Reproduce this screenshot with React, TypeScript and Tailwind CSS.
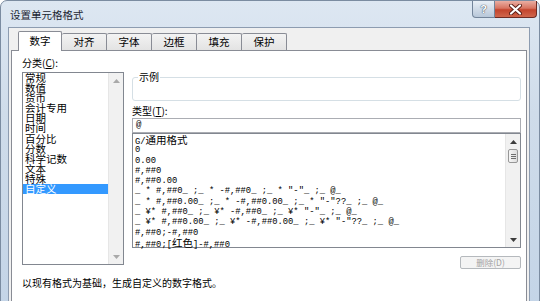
import React from 'react';

const categories = ['常规', '数值', '货币', '会计专用', '日期', '时间', '百分比', '分数', '科学记数', '文本', '特殊', '自定义'];

const formats = [
  'G/通用格式',
  '0',
  '0.00',
  '#,##0',
  '#,##0.00',
  '_ * #,##0_ ;_ * -#,##0_ ;_ * "-"_ ;_ @_',
  '_ * #,##0.00_ ;_ * -#,##0.00_ ;_ * "-"??_ ;_ @_',
  '_ ¥* #,##0_ ;_ ¥* -#,##0_ ;_ ¥* "-"_ ;_ @_',
  '_ ¥* #,##0.00_ ;_ ¥* -#,##0.00_ ;_ ¥* "-"??_ ;_ @_',
  '#,##0;-#,##0',
  '#,##0;[红色]-#,##0',
];

const tabs = ['数字', '对齐', '字体', '边框', '填充', '保护'];

const Arrow: React.FC<{ up?: boolean; dim?: boolean }> = ({ up, dim }) => (
  <svg width="7" height="4" viewBox="0 0 7 4">
    <path d={up ? 'M0 4L3.5 0L7 4Z' : 'M0 0L3.5 4L7 0Z'} fill={dim ? '#a9a9a9' : '#3c3c3c'} />
  </svg>
);

const FormatLine: React.FC<{ text: string }> = ({ text }) => {
  const parts = text.split(/([\u4e00-\u9fff]+)/);
  return (
    <div className="whitespace-pre h-[10.3px] leading-[10.3px]">
      {parts.map((p, i) =>
        /[\u4e00-\u9fff]/.test(p) ? (
          <span key={i} className="font-['Noto_Sans_CJK_SC',sans-serif] text-[10.5px]">
            {p}
          </span>
        ) : (
          <span key={i}>{p}</span>
        )
      )}
    </div>
  );
};

export default function App() {
  return (
    <div className="w-[547px] h-[301px] overflow-hidden bg-white font-['Noto_Sans_CJK_SC','Liberation_Sans',sans-serif] text-black">
      <div className="w-[540px] h-[320px] rounded-t-[7px] border border-[#7b8ca1] bg-[linear-gradient(180deg,#dde7f2_0%,#cfdcea_35%,#c3d4e7_100%)] flex flex-col">
        {/* title bar */}
        <div className="h-[26px] shrink-0 flex justify-between">
          <div className="pl-[9px] pt-[7px] text-[10.5px] leading-[14px] text-[#1d2633]">设置单元格格式</div>
          <div className="flex items-start mr-[2px]">
            <div className="w-[23px] h-[17px] rounded-bl-[4px] border border-t-0 border-[#73849a] bg-gradient-to-b from-[#e9eff6] to-[#b8c7d9] flex items-center justify-center">
              <span className="font-['Liberation_Sans',sans-serif] font-bold text-[11px] leading-none text-white [text-shadow:0_0_1px_#3a4656,0_0_1px_#3a4656]">?</span>
            </div>
            <div className="w-[42px] h-[17px] rounded-br-[4px] border border-t-0 border-l-0 border-[#6e2a22] bg-[linear-gradient(180deg,#eaaea3_0%,#d77461_45%,#c3442d_55%,#d0664c_100%)] flex items-center justify-center">
              <svg width="13" height="11" viewBox="0 0 13 11">
                <path d="M2 1.5L11 9.5M11 1.5L2 9.5" stroke="#5a1d16" strokeWidth="4" strokeLinecap="round" />
                <path d="M2 1.5L11 9.5M11 1.5L2 9.5" stroke="#ffffff" strokeWidth="2.2" strokeLinecap="round" />
              </svg>
            </div>
          </div>
        </div>

        {/* client area */}
        <div className="flex-1 ml-[7px] mr-[9px] bg-[#f0f0f0] border border-[#8d9cb0] flex flex-col">
          {/* tabs */}
          <div className="flex items-end pl-[9px] pt-[3px] relative z-10">
            {tabs.map((t, i) =>
              i === 0 ? (
                <div
                  key={t}
                  className="w-[44px] h-[20px] -mb-px bg-white border border-b-0 border-[#898c95] rounded-t-[2px] flex items-center justify-center text-[10.5px] leading-none pb-[1px]"
                >
                  {t}
                </div>
              ) : (
                <div
                  key={t}
                  className="w-[45px] h-[17px] bg-gradient-to-b from-[#f3f3f3] to-[#e3e3e3] border-t border-r border-[#898c95] rounded-t-[2px] flex items-center justify-center text-[10.5px] leading-none"
                >
                  {t}
                </div>
              )
            )}
          </div>

          {/* tab panel */}
          <div className="flex-1 mx-[2px] bg-white border border-[#898c95] flex flex-col">
            <div className="flex pl-[10px] pt-[6px]">
              {/* left column */}
              <div className="w-[102px] flex flex-col">
                <div className="h-[12px] text-[10px] leading-[12px]">
                  分类(<span className="underline">C</span>):
                </div>
                <div className="mt-[3px] h-[193px] border border-[#828790] bg-white flex">
                  <div className="flex-1 text-[10.5px] leading-[10.1px]">
                    {categories.map((c) => (
                      <div
                        key={c}
                        className={
                          c === '自定义'
                            ? 'h-[10.1px] pl-[2px] bg-[#3399ff] text-white'
                            : 'h-[10.1px] pl-[2px]'
                        }
                      >
                        {c}
                      </div>
                    ))}
                  </div>
                  <div className="w-[15px] flex flex-col bg-[#f1f1f1] border-l border-[#e6e6e6]">
                    <div className="h-[15px] flex items-center justify-center">
                      <Arrow up dim />
                    </div>
                    <div className="flex-1" />
                    <div className="h-[15px] flex items-center justify-center">
                      <Arrow dim />
                    </div>
                  </div>
                </div>
              </div>

              {/* right column */}
              <div className="ml-[8px] w-[389px] flex flex-col pt-[14px]">
                <fieldset className="border border-[#d5dfe5] rounded-[3px]">
                  <legend className="ml-[5px] px-[1px] text-[10px] leading-[12px]">示例</legend>
                  <div className="h-[17px]" />
                </fieldset>
                <div className="mt-[4px] h-[12px] text-[10px] leading-[12px]">
                  类型(<span className="underline">T</span>):
                </div>
                <div className="mt-[1px] h-[15px] border border-[#abadb3] bg-white pl-[3px] font-['Liberation_Mono',monospace] text-[9px] leading-[13px]">
                  @
                </div>
                <div className="h-[115px] border border-[#828790] bg-white flex">
                  <div className="flex-1 pl-[2px] pt-[1px] font-['Liberation_Mono','Noto_Sans_CJK_SC',monospace] text-[8.8px]">
                    {formats.map((f) => (
                      <FormatLine key={f} text={f} />
                    ))}
                  </div>
                  <div className="w-[15px] flex flex-col bg-[#f1f1f1] border-l border-[#e6e6e6]">
                    <div className="h-[15px] flex items-center justify-center">
                      <Arrow up />
                    </div>
                    <div className="mx-[2px] h-[14px] rounded-[2px] border border-[#979797] bg-gradient-to-r from-[#f6f6f6] to-[#dedede] flex flex-col items-center justify-center gap-[1px]">
                      <div className="w-[5px] h-px bg-[#6e6e6e]" />
                      <div className="w-[5px] h-px bg-[#6e6e6e]" />
                      <div className="w-[5px] h-px bg-[#6e6e6e]" />
                    </div>
                    <div className="flex-1" />
                    <div className="h-[15px] flex items-center justify-center">
                      <Arrow />
                    </div>
                  </div>
                </div>
                <div className="mt-[8px] self-end w-[61px] h-[13px] border border-[#b5b9bd] rounded-[2px] bg-[#f4f4f4] flex items-center justify-center text-[8.5px] leading-none text-[#a3a3a3]">
                  删除(D)
                </div>
              </div>
            </div>
            <div className="pl-[10px] mt-[8px] text-[10px] leading-[12px]">以现有格式为基础，生成自定义的数字格式。</div>
          </div>
        </div>
      </div>
    </div>
  );
}
